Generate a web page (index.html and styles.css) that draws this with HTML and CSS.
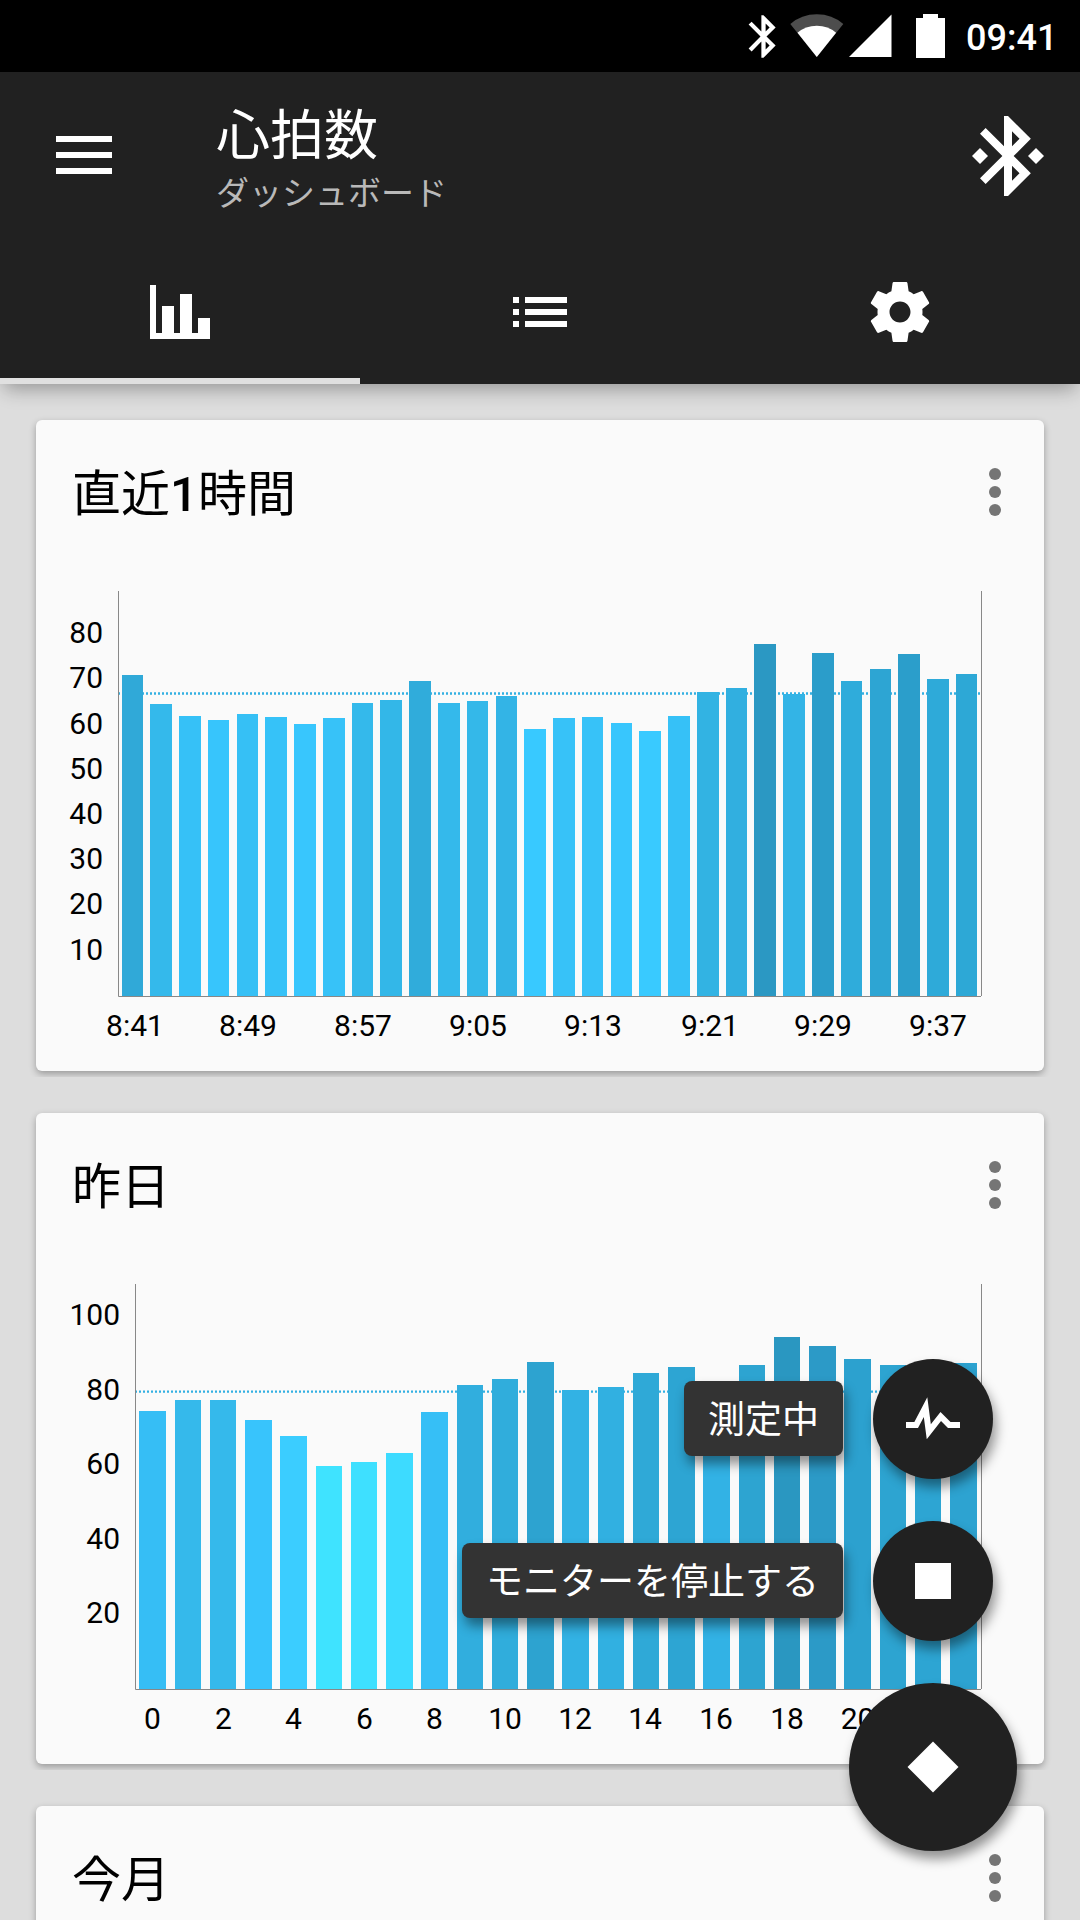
FILE: index.html
```html
<!DOCTYPE html>
<html lang="ja">
<head>
<meta charset="utf-8">
<title>心拍数</title>
<link rel="stylesheet" href="styles.css">
</head>
<body>
<div class="screen">
  <div class="status-bar">
    <svg class="status-bt" viewBox="0 0 24 24"><path d="M17.71 7.71L12 2h-1v7.59L6.41 5 5 6.41 10.59 12 5 17.59 6.41 19 11 14.41V22h1l5.71-5.71-4.3-4.29 4.3-4.29zM13 5.83l1.88 1.88L13 9.59V5.83zm1.88 10.46L13 18.17v-3.76l1.88 1.88z"/></svg>
    <svg class="status-wifi" viewBox="0 0 54 44"><path class="dim" d="M0.3 10Q11.500 0.300 26.800 0.300T53.300 10L26.800 43Z"/><path d="M7.500 18.700Q15.500 11.700 26.800 11.700T46.100 18.700L26.800 43Z"/></svg>
    <svg class="status-signal" viewBox="0 0 43 44"><path d="M0 43L42.500 .5V43Z"/></svg>
    <svg class="status-battery" viewBox="0 0 29 44"><path d="M7 0H22V4H29V44H0V4H7Z"/></svg>
    <span class="clock">09:41</span>
  </div>

  <header class="app-bar">
    <div class="toolbar">
      <div class="menu-icon"><i></i><i></i><i></i></div>
      <div class="heading">
        <h1 class="heading-title">心拍数</h1>
        <p class="heading-sub">ダッシュボード</p>
      </div>
      <svg class="bt-connected" viewBox="0 0 24 24"><path d="M7 12l-2-2-2 2 2 2 2-2zm10.710-4.290L12 2h-1v7.590L6.410 5 5 6.410 10.590 12 5 17.590 6.410 19 11 14.410V22h1l5.710-5.710-4.300-4.290 4.300-4.290zM13 5.830l1.880 1.880L13 9.590V5.830zm1.880 10.460L13 18.170v-3.760l1.880 1.880zM19 10l-2 2 2 2 2-2-2-2z"/></svg>
    </div>
    <nav class="tabs">
      <div class="tab tab-active"><svg class="icon" viewBox="0 0 72 72"><path d="M6 9H12V57H18V30H30V57H36V18H48V57H54V42H66V63H6Z"/></svg></div>
      <div class="tab"><svg class="icon" viewBox="0 0 24 24"><path d="M3 13h2v-2H3v2zm0 4h2v-2H3v2zm0-8h2V7H3v2zm4 4h14v-2H7v2zm0 4h14v-2H7v2zM7 7v2h14V7H7z"/></svg></div>
      <div class="tab"><svg class="icon" viewBox="0 0 24 24"><path d="M19.430 12.980c.04-.32.07-.64.07-.98s-.03-.66-.07-.98l2.110-1.650c.19-.15.24-.42.12-.64l-2-3.460c-.12-.22-.39-.3-.61-.22l-2.490 1c-.52-.4-1.080-.73-1.690-.98l-.38-2.650C14.460 2.180 14.250 2 14 2h-4c-.25 0-.46.18-.49.42l-.38 2.650c-.61.25-1.170.59-1.690.98l-2.490-1c-.23-.09-.49 0-.61.22l-2 3.460c-.13.22-.07.49.12.64l2.110 1.650c-.04.32-.07.65-.07.98s.03.66.07.98l-2.110 1.650c-.19.15-.24.42-.12.64l2 3.460c.12.22.39.3.61.22l2.490-1c.52.4 1.080.73 1.690.98l.38 2.650c.03.24.24.42.49.42h4c.25 0 .46-.18.49-.42l.38-2.650c.61-.25 1.170-.59 1.690-.98l2.490 1c.23.09.49 0 .61-.22l2-3.460c.12-.22.07-.49-.12-.64l-2.110-1.650zM12 15.500c-1.930 0-3.500-1.570-3.500-3.500s1.570-3.500 3.500-3.500 3.500 1.570 3.500 3.500-1.570 3.500-3.500 3.500z"/></svg></div>
    </nav>
  </header>

  <main class="cards">
    <div class="card-row">
      <section class="card">
        <div class="card-head">
          <h2 class="card-title">直近<b>1</b>時間</h2>
          <div class="more"><i></i><i></i><i></i></div>
        </div>
        <svg class="chart" viewBox="36 564 1008 507">
          <path class="average" d="M118 693.500H981"/>
          <g class="bars">
            <path fill="#30a9d8" d="M122 675h21V996h-21z"/>
            <path fill="#34b9eb" d="M150 704h22V996h-22z"/>
            <path fill="#36c1f7" d="M179 716h22V996h-22z"/>
            <path fill="#37c5fc" d="M208 720h21V996h-21z"/>
            <path fill="#36c0f5" d="M237 714h21V996h-21z"/>
            <path fill="#36c2f8" d="M265 717h22V996h-22z"/>
            <path fill="#38c6fd" d="M294 724h22V996h-22z"/>
            <path fill="#37c2f8" d="M323 718h22V996h-22z"/>
            <path fill="#34b9eb" d="M352 703h21V996h-21z"/>
            <path fill="#33b7e8" d="M380 700h22V996h-22z"/>
            <path fill="#30acdb" d="M409 681h22V996h-22z"/>
            <path fill="#34b9eb" d="M438 703h22V996h-22z"/>
            <path fill="#34b8e9" d="M467 701h21V996h-21z"/>
            <path fill="#33b4e6" d="M496 696h21V996h-21z"/>
            <path fill="#38c9ff" d="M524 729h22V996h-22z"/>
            <path fill="#37c2f8" d="M553 718h22V996h-22z"/>
            <path fill="#37c2f8" d="M582 717h21V996h-21z"/>
            <path fill="#38c6fd" d="M611 723h21V996h-21z"/>
            <path fill="#39caff" d="M639 731h22V996h-22z"/>
            <path fill="#36c1f7" d="M668 716h22V996h-22z"/>
            <path fill="#32b3e3" d="M697 692h22V996h-22z"/>
            <path fill="#31afe0" d="M726 688h21V996h-21z"/>
            <path fill="#2b98c3" d="M754 644h22V996h-22z"/>
            <path fill="#33b4e6" d="M783 694h22V996h-22z"/>
            <path fill="#2b9dca" d="M812 653h22V996h-22z"/>
            <path fill="#2facdb" d="M841 681h21V996h-21z"/>
            <path fill="#2da5d3" d="M870 669h21V996h-21z"/>
            <path fill="#2b9ecb" d="M898 654h22V996h-22z"/>
            <path fill="#2eaad9" d="M927 679h22V996h-22z"/>
            <path fill="#2da8d6" d="M956 674h21V996h-21z"/>
          </g>
          <path class="axis" d="M118.500 591V996.500H981M981.500 591V996"/>
          <g class="y-labels">
            <text x="103" y="643">80</text><text x="103" y="688">70</text><text x="103" y="734">60</text><text x="103" y="779">50</text>
            <text x="103" y="824">40</text><text x="103" y="869">30</text><text x="103" y="914">20</text><text x="103" y="960">10</text>
          </g>
          <g class="x-labels">
            <text x="135" y="1036">8:41</text><text x="248" y="1036">8:49</text><text x="363" y="1036">8:57</text><text x="478" y="1036">9:05</text>
            <text x="593" y="1036">9:13</text><text x="710" y="1036">9:21</text><text x="823" y="1036">9:29</text><text x="938" y="1036">9:37</text>
          </g>
        </svg>
      </section>
    </div>

    <div class="card-row">
      <section class="card">
        <div class="card-head">
          <h2 class="card-title">昨日</h2>
          <div class="more"><i></i><i></i><i></i></div>
        </div>
        <svg class="chart" viewBox="36 1257 1008 507">
          <path class="average" d="M135 1391.700H981"/>
          <g class="bars">
            <path fill="#36bef5" d="M139 1411h27V1689h-27z"/>
            <path fill="#35b9eb" d="M175 1400h26V1689h-26z"/>
            <path fill="#35b9eb" d="M210 1400h26V1689h-26z"/>
            <path fill="#38c4fc" d="M245 1420h27V1689h-27z"/>
            <path fill="#3bcdff" d="M280 1436h27V1689h-27z"/>
            <path fill="#3fe3ff" d="M316 1466h26V1689h-26z"/>
            <path fill="#3ee0ff" d="M351 1462h26V1689h-26z"/>
            <path fill="#3ddbff" d="M386 1453h27V1689h-27z"/>
            <path fill="#36bff6" d="M421 1412h27V1689h-27z"/>
            <path fill="#31aede" d="M457 1385h26V1689h-26z"/>
            <path fill="#30addc" d="M492 1379h26V1689h-26z"/>
            <path fill="#2da3d0" d="M527 1362h27V1689h-27z"/>
            <path fill="#32b2e4" d="M562 1390h27V1689h-27z"/>
            <path fill="#31b0e1" d="M598 1387h26V1689h-26z"/>
            <path fill="#2fa9d7" d="M633 1373h26V1689h-26z"/>
            <path fill="#2da5d3" d="M668 1367h27V1689h-27z"/>
            <path fill="#32b2e5" d="M703 1390h27V1689h-27z"/>
            <path fill="#2da4d1" d="M739 1365h26V1689h-26z"/>
            <path fill="#2a97c1" d="M774 1337h26V1689h-26z"/>
            <path fill="#2c9ac7" d="M809 1346h27V1689h-27z"/>
            <path fill="#2ca1cf" d="M844 1359h27V1689h-27z"/>
            <path fill="#2da4d1" d="M880 1365h26V1689h-26z"/>
            <path fill="#2da5d3" d="M915 1368h26V1689h-26z"/>
            <path fill="#2da3d1" d="M950 1363h27V1689h-27z"/>
          </g>
          <path class="axis" d="M135.500 1284V1689.500H981M981.500 1284V1689"/>
          <g class="y-labels">
            <text x="120" y="1325">100</text><text x="120" y="1400">80</text><text x="120" y="1474">60</text><text x="120" y="1549">40</text><text x="120" y="1623">20</text>
          </g>
          <g class="x-labels">
            <text x="152.500" y="1729">0</text><text x="223.500" y="1729">2</text><text x="293.500" y="1729">4</text><text x="364.500" y="1729">6</text>
            <text x="434.500" y="1729">8</text><text x="505" y="1729">10</text><text x="575" y="1729">12</text><text x="645" y="1729">14</text>
            <text x="716" y="1729">16</text><text x="787" y="1729">18</text><text x="857.500" y="1729">20</text>
          </g>
        </svg>
      </section>
    </div>

    <div class="card-row">
      <section class="card">
        <div class="card-head">
          <h2 class="card-title">今月</h2>
          <div class="more"><i></i><i></i><i></i></div>
        </div>
      </section>
    </div>
  </main>

  <div class="fab-menu">
    <div class="fab-item">
      <span class="fab-label">測定中</span>
      <div class="fab fab-mini"><svg class="icon" viewBox="0 0 24 24"><path d="M3 13H5.790L10.100 4.790L11.280 13.750L14.500 9.660L17.830 13H21V15H17L14.670 12.670L9.920 18.730L8.940 11.310L7 15H3Z"/></svg></div>
    </div>
    <div class="fab-item">
      <span class="fab-label">モニターを停止する</span>
      <div class="fab fab-mini"><svg class="icon" viewBox="0 0 24 24"><path d="M6 6h12v12H6z"/></svg></div>
    </div>
    <div class="fab fab-main"><svg class="icon" viewBox="0 0 72 72"><path d="M36 10.500L61.500 36L36 61.500L10.500 36Z"/></svg></div>
  </div>
</div>
</body>
</html>
```
FILE: styles.css
```css
* { box-sizing: border-box; margin: 0; padding: 0; }

body {
  background: #ddd;
  font-family: Roboto, "Noto Sans CJK JP", sans-serif;
}

.screen {
  position: relative;
  width: 1080px;
  height: 1920px;
  overflow: hidden;
  background: #ddd;
}

svg { display: block; flex: none; fill: #fff; }
.icon { width: 72px; height: 72px; }

/* Status bar */
.status-bar {
  display: flex;
  align-items: center;
  height: 72px;
  padding-left: 738px;
  background: #000;
}
.status-bt { width: 51px; height: 51px; }
.status-wifi { width: 54px; height: 44px; margin-left: 1px; }
.status-wifi .dim { fill: #4d4d4d; }
.status-signal { width: 43px; height: 44px; margin-left: 5px; }
.status-battery { width: 29px; height: 44px; margin-left: 24px; }
.clock {
  margin-left: 21px;
  padding-top: 4px;
  color: #fff;
  font-size: 36px;
  font-weight: 500;
  line-height: 44px;
}

/* App bar */
.app-bar {
  position: relative;
  z-index: 1;
  height: 312px;
  background: #212121;
  box-shadow: 0 9px 18px -4px rgba(0, 0, 0, .32);
}
.toolbar {
  display: flex;
  align-items: center;
  height: 168px;
  padding: 0 24px 0 56px;
}
.menu-icon { display: grid; gap: 10px; width: 56px; margin-bottom: 2px; }
.menu-icon i { height: 6px; background: #fff; }
.heading {
  flex: 1;
  align-self: flex-start;
  margin-left: 104px;
  padding-top: 33px;
}
.heading-title {
  height: 64px;
  color: #fff;
  font-size: 54px;
  font-weight: 400;
  line-height: 64px;
}
.heading-sub {
  height: 49px;
  color: #b9b9b9;
  font-size: 33px;
  line-height: 49px;
}
.bt-connected { width: 96px; height: 96px; }

.tabs { display: flex; height: 144px; }
.tab {
  display: flex;
  flex: 1;
  align-items: center;
  justify-content: center;
  border-bottom: 6px solid transparent;
  padding-top: 6px;
}
.tab-active { border-color: #e0e0e0; }

/* Cards */
.cards {
  display: grid;
  gap: 30px;
  padding-top: 30px;
}
.card-row { padding: 6px 36px; overflow: hidden; }
.card {
  height: 651px;
  border-radius: 6px;
  background: #fafafa;
  box-shadow: 0 3px 7px rgba(0, 0, 0, .3);
}
.card-head {
  display: flex;
  align-items: center;
  justify-content: space-between;
  height: 144px;
  padding: 0 43px 0 36px;
}
.card-title {
  height: 76px;
  color: #000;
  font-family: "Noto Sans CJK JP", sans-serif;
  font-size: 49px;
  font-weight: 400;
  line-height: 72px;
}
.card-title b { font-family: Roboto, sans-serif; font-weight: 500; }
.more { display: grid; gap: 6px; }
.more i { width: 12px; height: 12px; border-radius: 50%; background: #757575; }

/* Charts */
.chart { width: 1008px; height: 507px; }
.bars { shape-rendering: crispEdges; }
.axis { fill: none; stroke: #888; stroke-width: 1; }
.average { fill: none; stroke: #33b0e2; stroke-width: 2.3; stroke-dasharray: 2 2; }
.y-labels, .x-labels { fill: #000; font-size: 30px; }
.y-labels { text-anchor: end; }
.x-labels { text-anchor: middle; }

/* Floating action buttons */
.fab-menu {
  position: absolute;
  z-index: 2;
  right: 63px;
  bottom: 69px;
  display: flex;
  flex-direction: column;
  align-items: flex-end;
  gap: 42px;
}
.fab-item {
  display: flex;
  align-items: center;
  gap: 30px;
  margin-right: 24px;
}
.fab {
  display: flex;
  align-items: center;
  justify-content: center;
  border-radius: 50%;
  background: #212121;
  box-shadow: 3px 8px 12px rgba(0, 0, 0, .42);
}
.fab-mini { width: 120px; height: 120px; }
.fab-main { width: 168px; height: 168px; }
.fab-label {
  height: 75px;
  margin-bottom: 1px;
  padding: 0 24px;
  border-radius: 8px;
  background: #333;
  box-shadow: 3px 8px 12px rgba(0, 0, 0, .42);
  color: #fff;
  font-family: "Noto Sans CJK JP", sans-serif;
  font-size: 37px;
  line-height: 73px;
}
```
